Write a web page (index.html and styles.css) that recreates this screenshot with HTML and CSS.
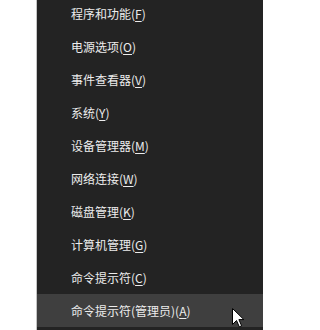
FILE: index.html
```html
<!DOCTYPE html>
<html lang="zh-CN">
<head>
<meta charset="utf-8">
<title>Win+X 菜单</title>
<link rel="stylesheet" href="styles.css">
</head>
<body>
<div class="screen">
  <div class="gap-left"></div>
  <div class="menu">
    <ul class="items">
      <li class="item">程序和功能(<u>F</u>)</li>
      <li class="item">电源选项(<u>O</u>)</li>
      <li class="item">事件查看器(<u>V</u>)</li>
      <li class="item">系统(<u>Y</u>)</li>
      <li class="item">设备管理器(<u>M</u>)</li>
      <li class="item">网络连接(<u>W</u>)</li>
      <li class="item">磁盘管理(<u>K</u>)</li>
      <li class="item">计算机管理(<u>G</u>)</li>
      <li class="item">命令提示符(<u>C</u>)</li>
      <li class="item active">命令提示符(管理员)(<u>A</u>)</li>
    </ul>
    <svg class="cursor" width="13" height="20" viewBox="0 0 13 20">
      <path d="M0.5 0.5 L0.5 16.5 L4.5 12.5 L7.3 18.8 L9.6 17.8 L6.9 11.6 L11.9 11.6 Z" fill="#ffffff" stroke="#000000" stroke-width="1" stroke-linejoin="miter"/>
    </svg>
  </div>
  <div class="gap-right"></div>
</div>
</body>
</html>
```
FILE: styles.css
```css
html, body {
  margin: 0;
  padding: 0;
  background: #ffffff;
}
.screen {
  display: flex;
  width: 280px;
  height: 330px;
  overflow: hidden;
}
.gap-left {
  width: 36px;
  flex: none;
  background: #ffffff;
  border-right: 1px solid #c4c4c4;
}
.menu {
  position: relative;
  width: 226px;
  flex: none;
  background: #232323;
  overflow: hidden;
}
.gap-right {
  flex: 1;
  background: #ffffff;
}
.items {
  list-style: none;
  margin: -3px 0 0 0;
  padding: 0;
}
.item {
  height: 33px;
  line-height: 33px;
  padding-left: 34px;
  font-family: "Noto Sans CJK SC", "Microsoft YaHei", sans-serif;
  font-size: 12px;
  color: #ececec;
  white-space: nowrap;
}
.item u {
  text-decoration: underline;
  text-underline-offset: 2px;
  text-decoration-thickness: 1px;
}
.item.active {
  background: #3f3f3f;
}
.cursor {
  position: absolute;
  left: 195px;
  top: 308px;
}
```
